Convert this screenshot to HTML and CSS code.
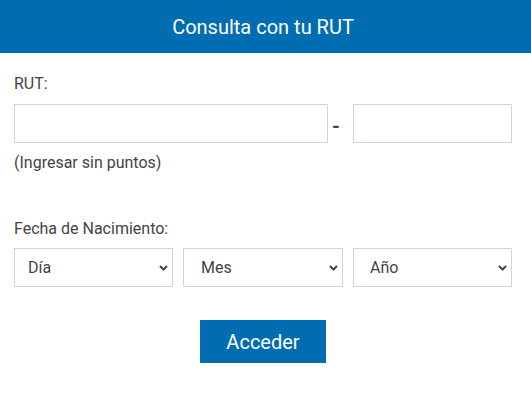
FILE: index.html
```html
<!DOCTYPE html>
<html lang="es">
<head>
<meta charset="utf-8">
<title>Consulta con tu RUT</title>
<link rel="stylesheet" href="styles.css">
</head>
<body>
<header class="header"><span class="header-title">Consulta con tu RUT</span></header>
<form class="form">
  <label class="label">RUT:</label>
  <div class="rut-row">
    <input class="field rut-main" type="text">
    <span class="dash">-</span>
    <input class="field rut-dv" type="text">
  </div>
  <p class="hint">(Ingresar sin puntos)</p>
  <label class="label label-date">Fecha de Nacimiento:</label>
  <div class="date-row">
    <select class="field select sel-day"><option>Día</option></select>
    <select class="field select sel-month"><option>Mes</option></select>
    <select class="field select sel-year"><option>Año</option></select>
  </div>
  <div class="actions">
    <button type="button" class="btn">Acceder</button>
  </div>
</form>
</body>
</html>
```
FILE: styles.css
```css
* { box-sizing: border-box; }
html, body { margin: 0; padding: 0; background: #fff; }
body { font-family: Roboto, "Noto Sans", sans-serif; color: #444; }

.header {
  height: 53px;
  background: #006db3;
  color: #fff;
  font-size: 20px;
  display: flex;
  align-items: center;
  justify-content: center;
  padding: 0 19px 0 14px;
}

.form {
  width: 498px;
  margin-left: 14px;
  padding-top: 21px;
  display: flex;
  flex-direction: column;
}

.label {
  font-size: 16px;
  line-height: 19px;
  display: block;
}

.rut-row {
  display: flex;
  align-items: center;
  margin-top: 11px;
}

.field {
  height: 39px;
  border: 1px solid #ced4da;
  background: #fff;
  font-family: Roboto, "Noto Sans", sans-serif;
  font-size: 16px;
  color: #444;
  border-radius: 0;
  outline: none;
  margin: 0;
}

.rut-main { width: 314px; }
.dash {
  width: 25px;
  font-size: 20px;
  font-weight: 700;
  line-height: 20px;
  color: #444;
  padding: 5px 0 0 4px;
}
.rut-dv { width: 159px; }

.hint {
  font-size: 16px;
  line-height: 19px;
  margin: 10px 0 0;
}

.label-date { margin-top: 47px; }

.date-row {
  display: flex;
  gap: 10px;
  margin-top: 10px;
}

.select {
  -webkit-appearance: none;
  appearance: none;
  padding: 0 0 0 16px;
  background-image: url("data:image/svg+xml;utf8,<svg xmlns='http://www.w3.org/2000/svg' width='9' height='6' viewBox='0 0 9 6'><path d='M1 1 L4.5 4.5 L8 1' fill='none' stroke='%23444' stroke-width='2'/></svg>");
  background-repeat: no-repeat;
  background-position: right 4px center;
  background-size: 9px 6px;
}
.sel-day { width: 159px; padding-left: 13px; }
.sel-month { width: 160px; padding-left: 17px; }
.sel-year { width: 159px; padding-left: 16px; }

.actions {
  display: flex;
  justify-content: center;
  margin-top: 33px;
}

.btn {
  width: 126px;
  height: 43px;
  border: 0;
  background: #006db3;
  color: #fff;
  font-family: Roboto, "Noto Sans", sans-serif;
  font-size: 20px;
  cursor: pointer;
}
```
